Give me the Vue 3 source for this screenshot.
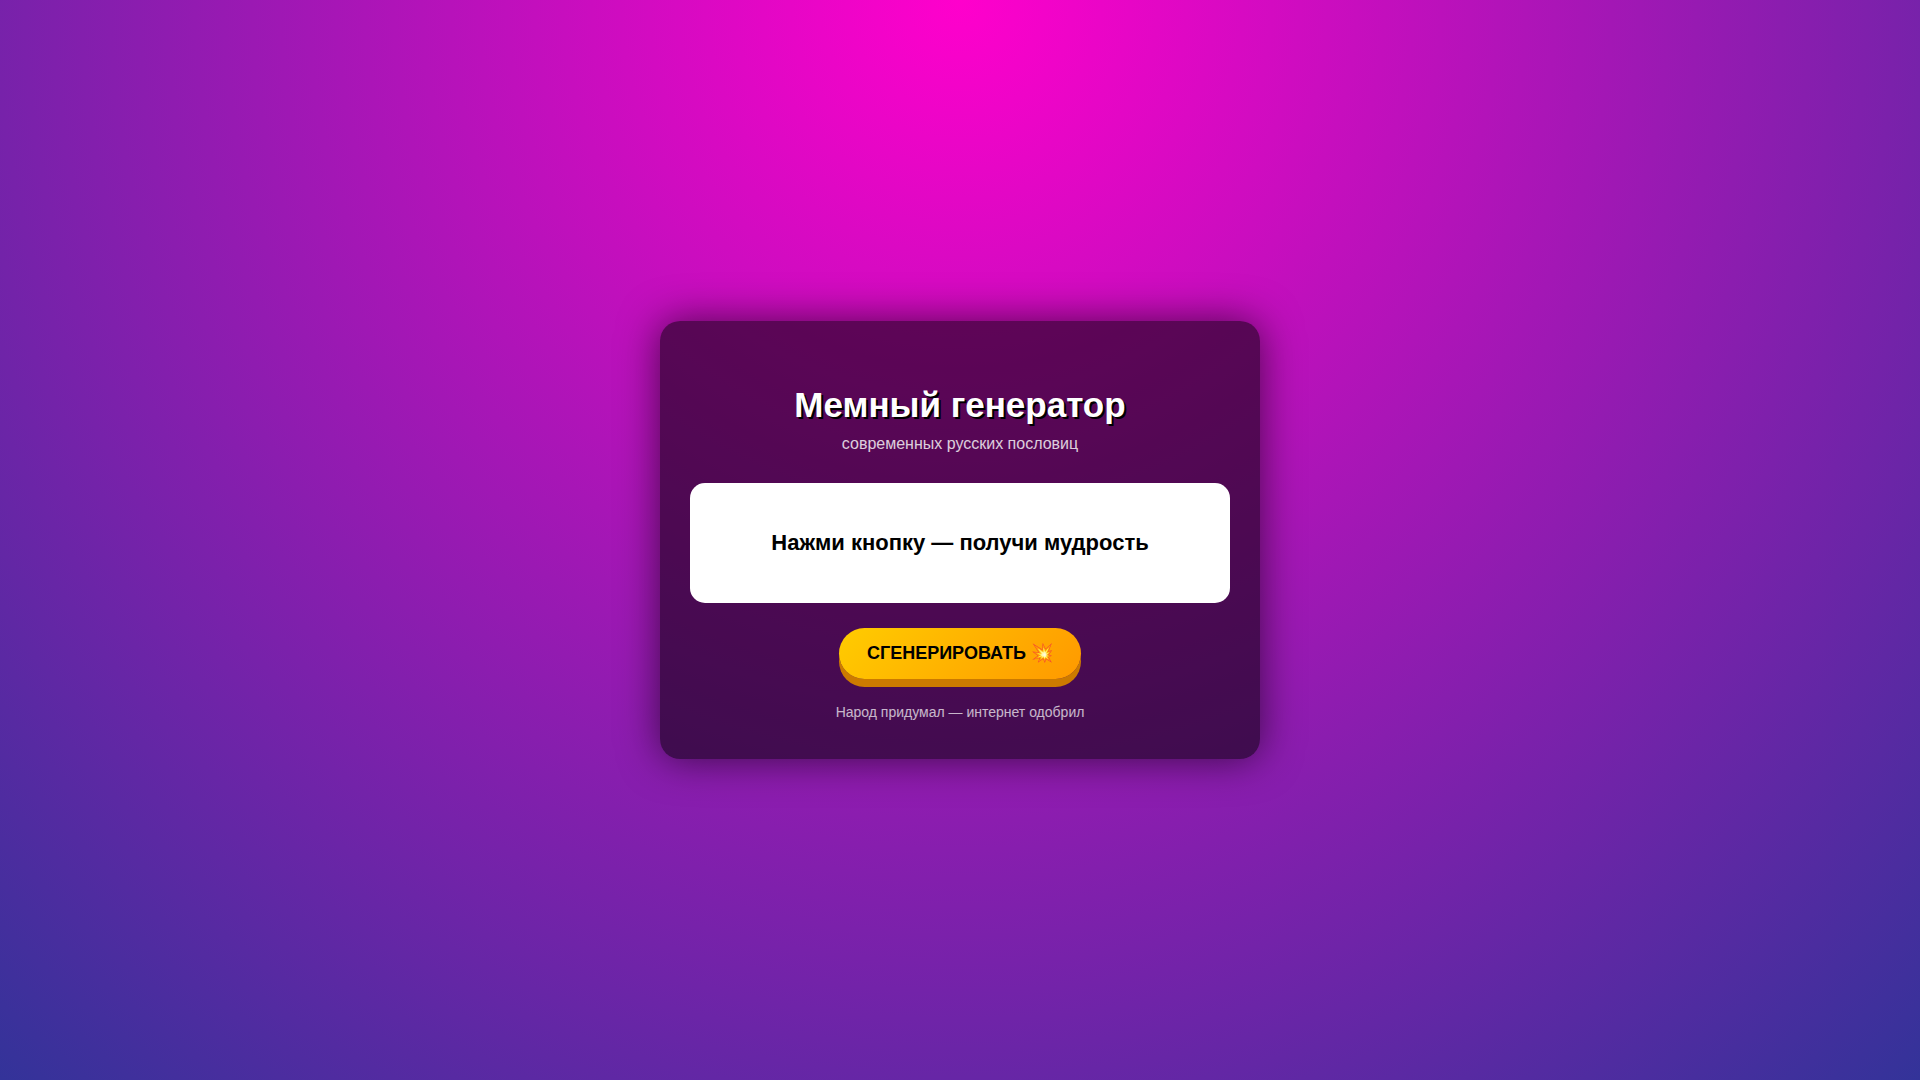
<script setup>
import { ref } from 'vue'

const proverbs = [
  'Тише едешь — дольше пробка',
  'Без вайфая не вытащишь и мем из чата',
  'Семь раз проверь, один раз отправь',
  'Старый мем лучше новых двух'
]
const proverb = ref('Нажми кнопку — получи мудрость')

function generate() {
  proverb.value = proverbs[Math.floor(Math.random() * proverbs.length)]
}
</script>

<template>
  <div class="page">
    <main class="card">
      <h1>Мемный генератор</h1>
      <p class="subtitle">современных русских пословиц</p>
      <div class="quote" aria-live="polite">{{ proverb }}</div>
      <button type="button" @click="generate">СГЕНЕРИРОВАТЬ 💥</button>
      <p class="note">Народ придумал — интернет одобрил</p>
    </main>
  </div>
</template>

<style>
body {
  margin: 0;
}
</style>

<style scoped>
.page {
  box-sizing: border-box;
  min-height: 100vh;
  display: flex;
  align-items: center;
  justify-content: center;
  background: radial-gradient(circle at top, #ff00cc, #333399);
  font-family: "Liberation Sans", Arial, sans-serif;
  color: #fff;
}

.card {
  box-sizing: border-box;
  width: 90%;
  max-width: 600px;
  padding: 30px;
  border-radius: 20px;
  background: rgba(0, 0, 0, 0.55);
  box-shadow: 0 0 40px rgba(0, 0, 0, 0.6);
  text-align: center;
}

h1 {
  margin: 34px 0 10px;
  font-size: 35px;
  line-height: 40px;
  text-shadow: 2px 2px 0 #000;
}

.subtitle {
  margin: 0 0 30px;
  font-size: 16px;
  line-height: 18px;
  opacity: 0.8;
}

.quote {
  box-sizing: border-box;
  display: flex;
  align-items: center;
  justify-content: center;
  min-height: 120px;
  padding: 25px;
  border-radius: 15px;
  background: #fff;
  color: #000;
  font-size: 22px;
  font-weight: bold;
}

button {
  margin-top: 25px;
  padding: 15px 28px;
  border: 0;
  border-radius: 50px;
  background: linear-gradient(135deg, #ffcc00, #ff9900);
  box-shadow: 0 8px 0 #cc7a00;
  color: #000;
  font-family: inherit;
  font-size: 18px;
  line-height: 21px;
  font-weight: bold;
  cursor: pointer;
}

button:active {
  transform: translateY(4px);
  box-shadow: 0 4px 0 #cc7a00;
}

.note {
  margin: 25px 0 8px;
  font-size: 14px;
  line-height: 17px;
  opacity: 0.7;
}
</style>
